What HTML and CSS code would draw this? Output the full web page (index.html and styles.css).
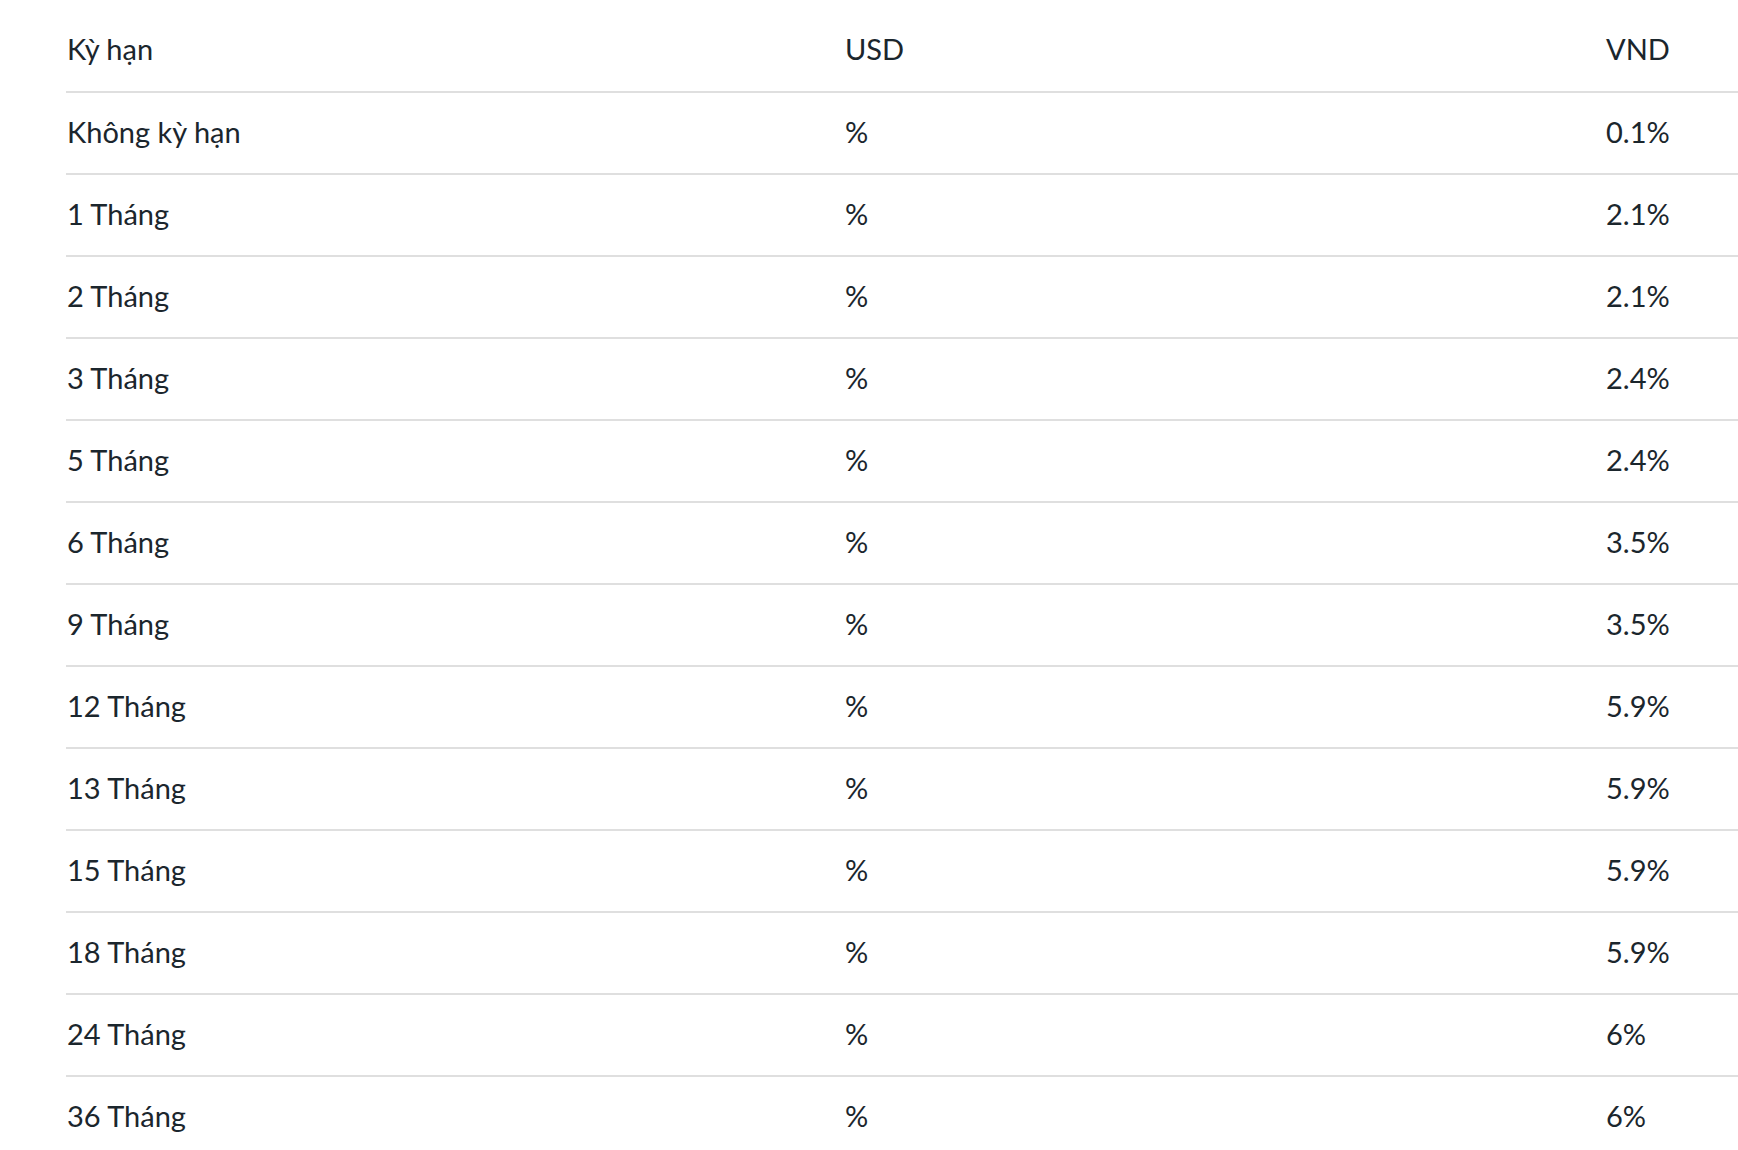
FILE: index.html
```html
<!DOCTYPE html>
<html lang="vi">
<head>
  <meta charset="UTF-8">
  <meta name="viewport" content="width=device-width, initial-scale=1.0">
  <title>Lãi suất tiết kiệm</title>
  <link rel="stylesheet" href="styles.css">
</head>
<body>
  <div class="rate-wrap">
    <table class="rate-table">
      <thead>
        <tr>
          <th class="col-term">Kỳ hạn</th>
          <th class="col-usd">USD</th>
          <th class="col-vnd">VND</th>
        </tr>
      </thead>
      <tbody>
        <tr><td>Không kỳ hạn</td><td>%</td><td>0.1%</td></tr>
        <tr><td>1 Tháng</td><td>%</td><td>2.1%</td></tr>
        <tr><td>2 Tháng</td><td>%</td><td>2.1%</td></tr>
        <tr><td>3 Tháng</td><td>%</td><td>2.4%</td></tr>
        <tr><td>5 Tháng</td><td>%</td><td>2.4%</td></tr>
        <tr><td>6 Tháng</td><td>%</td><td>3.5%</td></tr>
        <tr><td>9 Tháng</td><td>%</td><td>3.5%</td></tr>
        <tr><td>12 Tháng</td><td>%</td><td>5.9%</td></tr>
        <tr><td>13 Tháng</td><td>%</td><td>5.9%</td></tr>
        <tr><td>15 Tháng</td><td>%</td><td>5.9%</td></tr>
        <tr><td>18 Tháng</td><td>%</td><td>5.9%</td></tr>
        <tr><td>24 Tháng</td><td>%</td><td>6%</td></tr>
        <tr><td>36 Tháng</td><td>%</td><td>6%</td></tr>
      </tbody>
    </table>
  </div>
</body>
</html>
```

FILE: styles.css
```css
body {
  font-family: 'Lato', 'Noto Sans', sans-serif;
  background-color: #ffffff;
  color: #1b262d;
  margin: 0;
  padding: 0;
  overflow: hidden;
}
.rate-wrap {
  padding: 10px 0 0 66px;
}
.rate-table {
  width: 1700px;
  border-collapse: collapse;
  table-layout: fixed;
}
.col-term {
  width: 778px;
}
.col-usd {
  width: 761px;
}
th, td {
  height: 82px;
  box-sizing: border-box;
  padding: 0 0 4px 1px;
  text-align: left;
  font-size: 29px;
  font-weight: 400;
  vertical-align: middle;
}
thead tr,
tbody tr {
  border-bottom: 2px solid #dfdfdf;
}
tbody tr:last-child {
  border-bottom: none;
}
```
